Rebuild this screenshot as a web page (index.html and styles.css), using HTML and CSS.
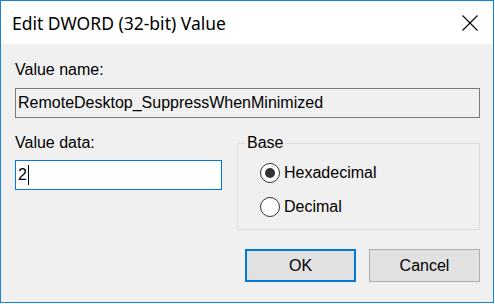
FILE: index.html
```html
<!DOCTYPE html>
<html lang="en">
<head>
    <meta charset="UTF-8">
    <meta name="viewport" content="width=device-width, initial-scale=1.0">
    <title>Edit DWORD (32-bit) Value</title>
    <link rel="stylesheet" href="styles.css">
</head>
<body>
    <div class="dialog">
        <!-- title bar -->
        <div class="titlebar">
            <span class="title">Edit DWORD (32-bit) Value</span>
            <svg class="close" width="16" height="16" viewBox="0 0 16 16">
                <path d="M0.5 0.5 L15.5 15.5 M15.5 0.5 L0.5 15.5" stroke="#000" stroke-width="1.1" fill="none"/>
            </svg>
        </div>

        <div class="content">
            <!-- value name -->
            <div class="label">Value name:</div>
            <div class="field field-readonly">RemoteDesktop_SuppressWhenMinimized</div>

            <div class="row">
                <!-- value data -->
                <div class="data-col">
                    <div class="label">Value data:</div>
                    <div class="field field-focus">2<span class="caret"></span></div>
                </div>

                <!-- base -->
                <fieldset class="base">
                    <legend>Base</legend>
                    <div class="radio"><span class="radio-dot checked"></span>Hexadecimal</div>
                    <div class="radio"><span class="radio-dot"></span>Decimal</div>
                </fieldset>
            </div>

            <!-- buttons -->
            <div class="buttons">
                <button class="btn btn-default">OK</button>
                <button class="btn">Cancel</button>
            </div>
        </div>
    </div>
</body>
</html>
```

FILE: styles.css
```css
body {
    margin: 0;
    background: #fff;
    font-family: "Liberation Sans", Arial, sans-serif;
    font-size: 16px;
    color: #000;
}

.dialog {
    width: 494px;
    height: 303px;
    box-sizing: border-box;
    border: 1px solid #1883d7;
    background: #f0f0f0;
}

/* title */
.titlebar {
    height: 43px;
    background: #fff;
    display: flex;
    align-items: center;
    padding-left: 11px;
}

.title {
    font-family: "Noto Sans", "Open Sans", sans-serif;
    font-size: 17.5px;
}

.close {
    margin-left: auto;
    margin-right: 15px;
}

/* content */
.content {
    padding: 17px 13px 0 14px;
}

.label {
    line-height: 18px;
}

.field {
    box-sizing: border-box;
    height: 30px;
    line-height: 28px;
    padding-left: 2px;
    display: flex;
    align-items: center;
}

.field-readonly {
    margin-top: 9px;
    border: 1px solid #7a7a7a;
    background: #f0f0f0;
}

.field-focus {
    margin-top: 8px;
    border: 1px solid #0078d7;
    background: #fff;
}

.caret {
    width: 1px;
    height: 20px;
    background: #000;
    margin-left: 1px;
}

.row {
    display: flex;
    gap: 15px;
    margin-top: 16px;
}

.data-col {
    width: 207px;
}

/* base group */
.base {
    width: 243px;
    box-sizing: border-box;
    margin: 0;
    padding: 11px 0 12px 22px;
    border: 1px solid #dcdcdc;
    min-inline-size: 0;
}

.base legend {
    margin-left: -15px;
    padding: 0 2px;
    line-height: 18px;
}

.radio {
    display: flex;
    align-items: center;
    gap: 4px;
    line-height: 20px;
}

.radio + .radio {
    margin-top: 14px;
}

.radio-dot {
    width: 20px;
    height: 20px;
    box-sizing: border-box;
    border: 1px solid #333;
    border-radius: 50%;
    background: #fff;
    display: flex;
    align-items: center;
    justify-content: center;
}

.radio-dot.checked::after {
    content: "";
    width: 10px;
    height: 10px;
    border-radius: 50%;
    background: #333;
}

/* buttons */
.buttons {
    display: flex;
    justify-content: flex-end;
    gap: 13px;
    margin-top: 19px;
}

.btn {
    width: 111px;
    height: 33px;
    box-sizing: border-box;
    background: #e1e1e1;
    border: 1px solid #adadad;
    font-family: "Liberation Sans", Arial, sans-serif;
    font-size: 16px;
    color: #000;
    padding: 0;
}

.btn-default {
    border: 2px solid #0078d7;
}
```
